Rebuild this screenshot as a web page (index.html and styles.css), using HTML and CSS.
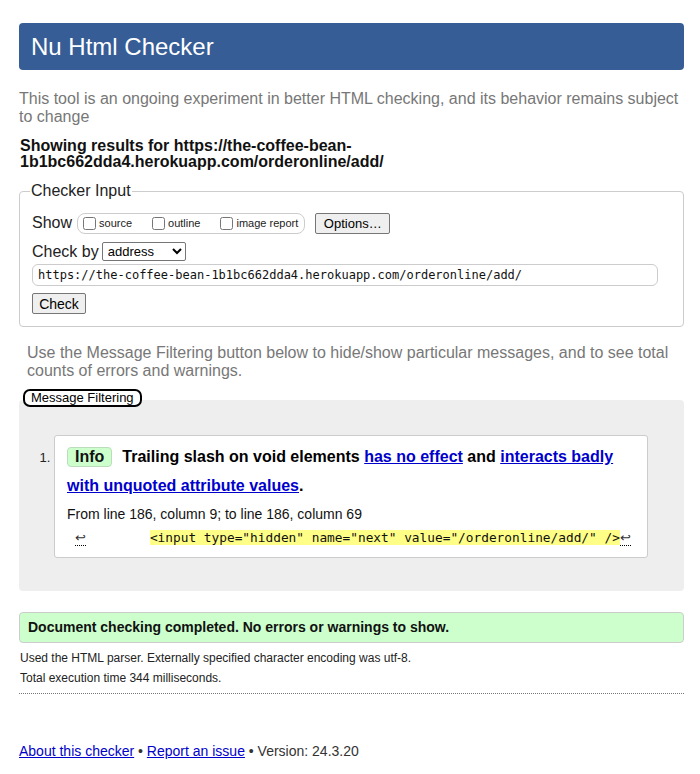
FILE: index.html
```html
<!DOCTYPE html>
<html>
<head>
<meta charset="utf-8">
<link rel="stylesheet" href="styles.css">
</head>
<body>
<h1 class="title">Nu Html Checker</h1>
<p class="intro">This tool is an ongoing experiment in better HTML checking, and its behavior remains subject to change</p>
<p class="showing">Showing results for https://the-coffee-bean-1b1bc662dda4.herokuapp.com/orderonline/add/</p>
<fieldset class="input-box">
  <legend>Checker Input</legend>
  <div class="row show-row">
    <span class="lbl">Show</span>
    <span class="opts">
      <label><input type="checkbox">source</label>
      <label><input type="checkbox">outline</label>
      <label><input type="checkbox">image report</label>
    </span>
    <button class="btn">Options…</button>
  </div>
  <div class="row by-row">
    <span class="lbl">Check by</span>
    <select class="sel"><option>address</option></select>
  </div>
  <div class="url">https://the-coffee-bean-1b1bc662dda4.herokuapp.com/orderonline/add/</div>
  <button class="btn check">Check</button>
</fieldset>
<p class="filter-note">Use the Message Filtering button below to hide/show particular messages, and to see total counts of errors and warnings.</p>
<div class="filter-btn">Message Filtering</div>
<div class="results">
  <ol class="msgs">
    <li class="msg">
      <p class="msg-text"><span class="badge">Info</span><span class="bold">Trailing slash on void elements <a href="#">has no effect</a> and <a href="#">interacts badly with unquoted attribute values</a>.</span></p>
      <p class="loc">From line 186, column 9; to line 186, column 69</p>
      <p class="extract"><span class="lf">↩</span><span class="ws">        </span><mark>&lt;input type="hidden" name="next" value="/orderonline/add/" /&gt;</mark><span class="lf">↩</span></p>
    </li>
  </ol>
</div>
<p class="success">Document checking completed. No errors or warnings to show.</p>
<p class="details">Used the HTML parser. Externally specified character encoding was utf-8.</p>
<p class="details">Total execution time 344 milliseconds.</p>
<hr class="sep">
<p class="footer"><a href="#">About this checker</a> • <a href="#">Report an issue</a> • Version: 24.3.20</p>
</body>
</html>
```
FILE: styles.css
```css
html { background: #fff; }
body {
  margin: 0;
  padding: 23px 16px 0 19px;
  font-family: "Liberation Sans", Arial, sans-serif;
  color: #000;
}
.title {
  margin: 0;
  background: #365d95;
  color: #fff;
  font-weight: normal;
  font-size: 24px;
  line-height: 47px;
  height: 47px;
  padding: 0 12px;
  border-radius: 4px;
}
.intro {
  margin: 20px 0 0 0;
  color: #777;
  font-size: 16px;
  line-height: 18px;
}
.showing {
  margin: 12px 0 0 1px;
  font-weight: bold;
  font-size: 16px;
  line-height: 16px;
  color: #111;
}
.input-box {
  margin: 12px 0 0 0;
  border: 1px solid #ccc;
  border-radius: 4px;
  padding: 0 12px 12px 12px;
}
.input-box legend {
  font-size: 16px;
  padding: 0 1px;
  margin-left: -2px;
  color: #222;
}
.row { display: flex; align-items: center; }
.lbl { font-size: 16px; color: #222; }
.show-row { margin-top: 12px; height: 22px; }
.opts {
  display: inline-flex;
  align-items: center;
  margin-left: 5px;
  border: 1px solid #ccc;
  border-radius: 8px;
  height: 19px;
  padding: 0 6px 0 5px;
  font-size: 11px;
  color: #222;
}
.opts label { display: inline-flex; align-items: center; margin-right: 20px; }
.opts label:last-child { margin-right: 0; }
.opts input { margin: 0 3px 0 0; width: 13px; height: 13px; }
.btn {
  font-family: "Liberation Sans", Arial, sans-serif;
  font-size: 13px;
  background: #efefef;
  border: 1px solid #767676;
  border-radius: 2px;
  padding: 0 6px;
  height: 21px;
  color: #000;
}
.show-row .btn { margin-left: 10px; width: 75px; }
.by-row { margin-top: 8px; }
.sel {
  margin-left: 3px;
  font-family: "Liberation Sans", Arial, sans-serif;
  font-size: 13px;
  width: 84px;
  height: 19px;
  border: 1px solid #767676;
  border-radius: 2px;
  background: #fff;
  padding: 0 1px;
}
.url {
  margin-top: 3px;
  height: 20px;
  border: 1px solid #ccc;
  border-radius: 6px;
  font-family: "DejaVu Sans Mono", monospace;
  font-size: 12px;
  line-height: 20px;
  padding: 0 0 0 5px;
  color: #111;
  margin-right: 13px;
}
.btn.check { margin-top: 7px; width: 54px; font-size: 14px; height: 21px; padding: 0; }
.filter-note {
  margin: 17px 0 0 8px;
  color: #777;
  font-size: 16px;
  line-height: 18px;
}
.filter-btn {
  display: inline-block;
  position: relative;
  z-index: 1;
  margin: 9px 0 0 4px;
  border: 2px solid #000;
  border-radius: 7px;
  font-size: 13px;
  line-height: 14px;
  padding: 0 6px;
  background: #fff;
}
.results {
  margin-top: -7px;
  background: #eee;
  border-radius: 4px;
  padding: 35px 36px 33px 0;
}
.msgs {
  margin: 0;
  padding-left: 35px;
  font-size: 13px;
  color: #222;
}
.msg {
  background: #fff;
  border: 1px solid #ccc;
  border-radius: 3px;
  padding: 6px 12px 11px 12px;
}
.msg-text {
  margin: 0;
  font-size: 16px;
  line-height: 29px;
}
.badge {
  display: inline-block;
  background: #cfc;
  border: 1px solid #bdb;
  border-radius: 4px;
  font-weight: bold;
  line-height: 18px;
  padding: 0 7px;
  margin-right: 10px;
  color: #111;
}
.bold { font-weight: bold; color: #000; }
.bold a { color: #00c; }
.loc {
  margin: 6px 0 0 0;
  font-size: 14px;
  color: #111;
}
.extract {
  margin: 7px 0 0 0;
  font-family: "DejaVu Sans Mono", monospace;
  font-size: 12.8px;
  line-height: 17px;
  white-space: pre;
  color: #111;
}
.extract mark { background: #ff8; color: #111; }
.lf {
  font-family: "DejaVu Sans", sans-serif;
  font-size: 13px;
  line-height: 14px;
  color: #333;
  border-bottom: 1px dotted #000;
}
.extract .lf:first-child { margin-left: 8px; }
.ws { display: inline-block; width: 64px; }
.success {
  margin: 21px 0 0 0;
  background: #cfc;
  border: 1px solid #ccc;
  border-radius: 4px;
  font-weight: bold;
  font-size: 14px;
  line-height: 29px;
  padding: 0 8px;
  color: #111;
}
.details {
  margin: 9px 0 0 1px;
  font-size: 12px;
  line-height: 13px;
  color: #222;
}
.details + .details { margin-top: 7px; }
.sep {
  margin: 8px 0 0 0;
  border: 0;
  border-top: 1px dotted #777;
}
.footer {
  margin: 49px 0 0 0;
  font-size: 14px;
  color: #333;
}
.footer a { color: #00c; }
```
